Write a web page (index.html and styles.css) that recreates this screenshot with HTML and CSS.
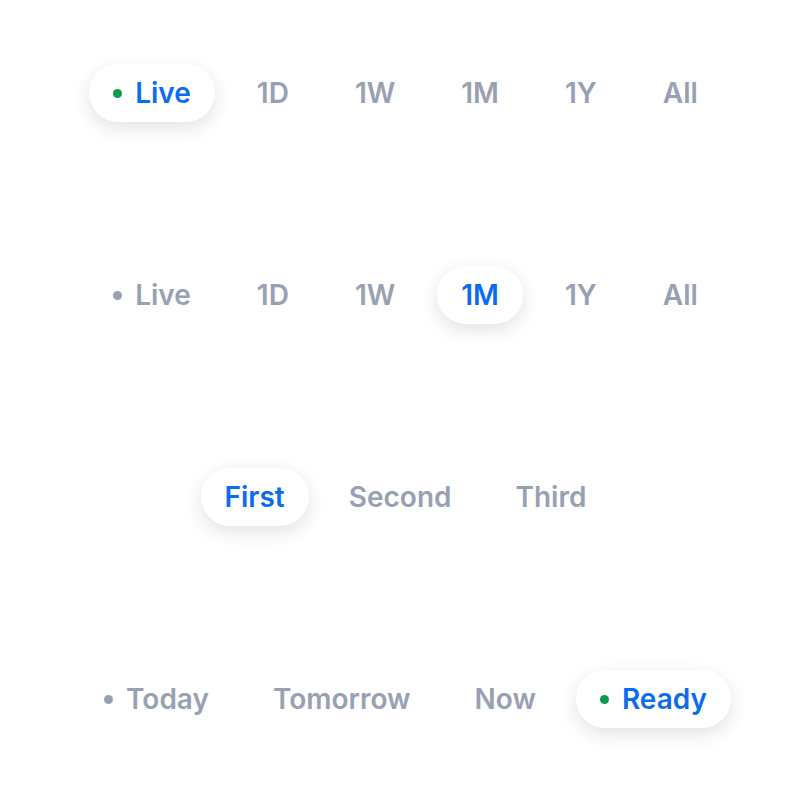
FILE: index.html
```html
<!DOCTYPE html>
<html lang="en">
<head>
<meta charset="utf-8">
<title>Segmented tabs</title>
<link rel="stylesheet" href="styles.css">
</head>
<body>
<main class="page">
  <nav class="tabs range">
    <span class="tab active"><span class="dot live"></span>Live</span>
    <span class="tab">1D</span>
    <span class="tab">1W</span>
    <span class="tab">1M</span>
    <span class="tab">1Y</span>
    <span class="tab">All</span>
  </nav>
  <nav class="tabs range">
    <span class="tab"><span class="dot"></span>Live</span>
    <span class="tab">1D</span>
    <span class="tab">1W</span>
    <span class="tab active">1M</span>
    <span class="tab">1Y</span>
    <span class="tab">All</span>
  </nav>
  <nav class="tabs">
    <span class="tab active">First</span>
    <span class="tab">Second</span>
    <span class="tab">Third</span>
  </nav>
  <nav class="tabs">
    <span class="tab"><span class="dot"></span>Today</span>
    <span class="tab">Tomorrow</span>
    <span class="tab">Now</span>
    <span class="tab active"><span class="dot live"></span>Ready</span>
  </nav>
</main>
</body>
</html>
```
FILE: styles.css
```css
html, body {
  margin: 0;
  padding: 0;
  background: #ffffff;
}
body {
  font-family: "Inter", "Noto Sans", sans-serif;
}
.page {
  height: 792px;
  box-sizing: border-box;
  padding: 64px 0;
  display: flex;
  flex-direction: column;
  align-items: center;
  gap: 144px;
}
.tabs {
  display: flex;
  align-items: center;
  gap: 16px;
}
.tabs.range {
  gap: 18px;
}
.tab {
  height: 58px;
  box-sizing: border-box;
  padding: 0 24px;
  display: inline-flex;
  align-items: center;
  gap: 13px;
  border-radius: 29px;
  font-size: 28px;
  font-weight: 600;
  color: #98a1b3;
  white-space: nowrap;
}
.tab.active {
  background: #ffffff;
  color: #0b6cf0;
  box-shadow: 0 6px 18px rgba(20, 30, 60, 0.13);
}
.dot {
  width: 9px;
  height: 9px;
  border-radius: 50%;
  background: #98a1b3;
  flex: none;
}
.dot.live {
  background: #0a9a4c;
}
```
